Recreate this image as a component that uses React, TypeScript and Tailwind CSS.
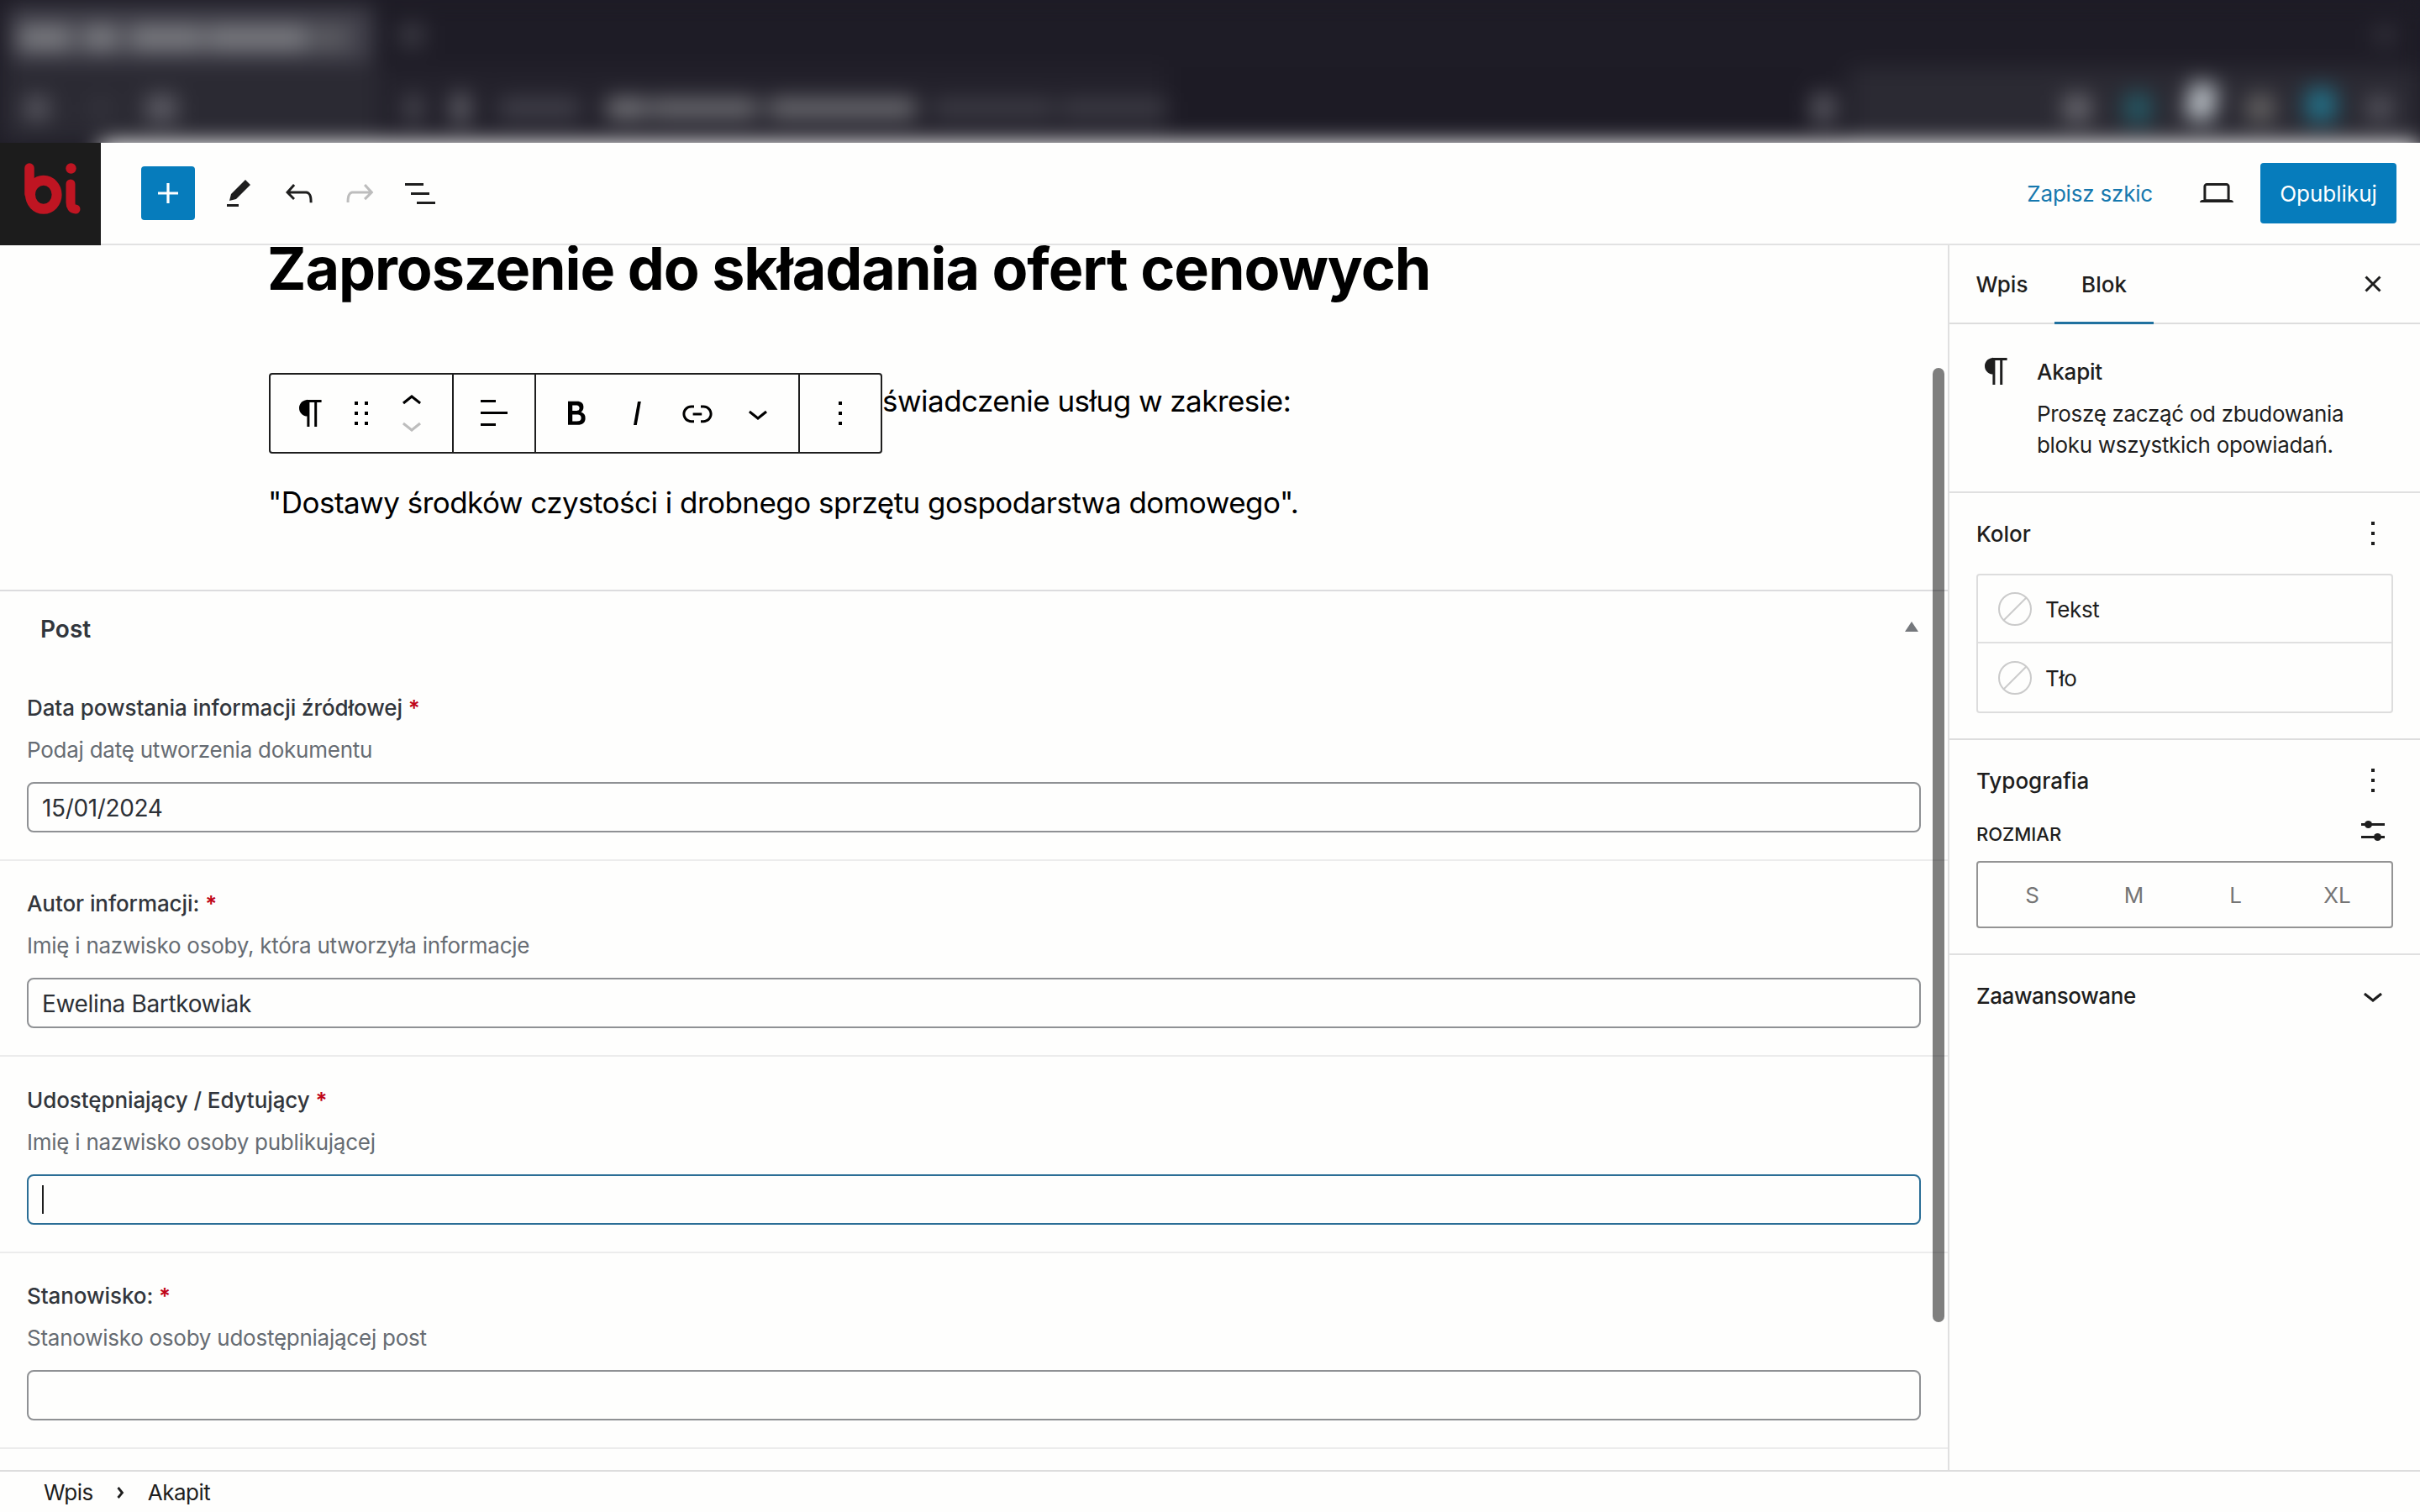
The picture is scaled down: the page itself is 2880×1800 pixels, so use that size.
import React from 'react';
import clsx from 'clsx';

interface Field {
  id: string;
  label: string;
  description: string;
  value: string;
  focused?: boolean;
  className?: string;
}

const fields: Field[] = [
  { id: 'date', label: "Data powstania informacji źródłowej", description: "Podaj datę utworzenia dokumentu", value: "15/01/2024", className: "h-[233px] pt-[33px]" },
  { id: 'author', label: "Autor informacji:", description: "Imię i nazwisko osoby, która utworzyła informacje", value: "Ewelina Bartkowiak", className: "h-[233px] pt-[33px]" },
  { id: 'editor', label: "Udostępniający / Edytujący", description: "Imię i nazwisko osoby publikującej", value: "", focused: true, className: "h-[234px] pt-[34px]" },
  { id: 'position', label: "Stanowisko:", description: "Stanowisko osoby udostępniającej post", value: "", className: "h-[233px] pt-[33px]" },
];

const sizes = ["S", "M", "L", "XL"];

// Blurred shapes of the browser window above the editor
const tabShapes = [
  "ml-3 w-16 bg-[#7c7d82]",
  "ml-3 w-11 bg-[#7c7d82]",
  "ml-3 w-22 bg-[#7c7d82]",
  "ml-1 w-30 bg-[#7c7d82]",
  "ml-1 w-11 bg-[#5c5c62]",
];

const addressShapes = [
  "ml-[30px] size-7 bg-[#5b5a63]",
  "ml-13 size-5 bg-[#393841]",
  "ml-11 h-8 w-9 bg-[#5e5d66]",
  "ml-[272px] h-8 w-5 bg-[#4b4a53]",
  "ml-9 h-9 w-5 bg-[#66656d]",
  "ml-9 h-6 w-24 bg-[#41404a]",
  "ml-8 h-6 w-12 bg-[#77777c]",
  "ml-1 h-6 w-32 bg-[#6d6d72]",
  "ml-3 h-6 w-44 bg-[#6d6d72]",
  "ml-5 h-5 w-36 bg-[#403f48]",
  "ml-2 h-5 w-32 bg-[#403f48]",
];

const extensionShapes = [
  "ml-[272px] size-8 bg-[#6a6970]",
  "ml-[40px] h-9 w-8 bg-[#245965]",
  "ml-[44px] h-11 w-8 -translate-y-2 rotate-12 bg-[#bcc2c8]",
  "ml-[38px] h-8 w-8 bg-[#666464]",
  "ml-[38px] h-10 w-9 -translate-y-1 bg-[#236f86]",
  "ml-[38px] size-7 bg-[#57565f]",
];

interface IconProps {
  d: string;
  className?: string;
}

function Icon({ d, className }: IconProps) {
  return (
    <svg viewBox="0 0 24 24" className={clsx("size-12 shrink-0", className)} fill="currentColor">
      <path d={d} />
    </svg>
  );
}

const icons = {
  plus: "M18 11.2h-5.2V6h-1.6v5.2H6v1.6h5.2V18h1.6v-5.2H18z",
  edit: "m19 7-3-3-8.5 8.5-1 4 4-1L19 7Zm-7 11.5H5V20h7v-1.5Z",
  undo: "M18.3 11.7c-.6-.6-1.4-.9-2.3-.9H6.7l2.9-3.3-1.1-1-4.5 5L8.5 16l1-1-2.7-2.7H16c.5 0 .9.2 1.3.5 1 1 1 3.4 1 4.5v.3h1.5v-.2c0-1.5 0-4.3-1.5-5.7z",
  redo: "M15.6 6.5l-1.1 1 2.9 3.3H8c-.9 0-1.7.3-2.3.9-1.4 1.5-1.4 4.2-1.4 5.6v.2h1.5v-.3c0-1.1 0-3.5 1-4.5.3-.3.7-.5 1.3-.5h9.2L14.5 15l1.1 1.1 4.6-4.6-4.6-5z",
  listView: "M3 6h11v1.5H3V6Zm3.5 5.5h11V13h-11v-1.5ZM21 17H10v1.5h11V17Z",
  desktop: "M20.5 16h-.7V8c0-1.1-.9-2-2-2H6.2c-1.1 0-2 .9-2 2v8h-.7c-.8 0-1.5.7-1.5 1.5h20c0-.8-.7-1.5-1.5-1.5zM5.7 8c0-.3.2-.5.5-.5h11.6c.3 0 .5.2.5.5v7.6H5.7V8z",
  close: "M12 13.06l3.712 3.713 1.061-1.06L13.061 12l3.712-3.712-1.06-1.06L12 10.938 8.288 7.227l-1.061 1.06L10.939 12l-3.712 3.712 1.06 1.061L12 13.061z",
  paragraph: "M18.3 4H9.9v-.1l-.9.2c-2.3.4-4 2.4-4 4.8s1.7 4.4 4 4.8l.7.1V20h1.5V5.5h2.9V20h1.5V5.5h2.7V4z",
  drag: "M8 7h2V5H8v2zm0 6h2v-2H8v2zm0 6h2v-2H8v2zm6-14v2h2V5h-2zm0 8h2v-2h-2v2zm0 6h2v-2h-2v2z",
  chevronUp: "M6.5 12.4L12 8l5.5 4.4-.9 1.2L12 10l-4.5 3.6-1-1.2z",
  chevronDown: "M17.5 11.6L12 16l-5.5-4.4.9-1.2L12 14l4.5-3.6 1 1.2z",
  alignLeft: "M13 5.5H4V4h9v1.5Zm7 7H4V11h16v1.5Zm-7 7H4V18h9v1.5Z",
  bold: "M14.7 11.3c1-.6 1.5-1.6 1.5-3 0-2.3-1.3-3.4-4-3.4H7v14h5.8c1.4 0 2.5-.3 3.3-1 .8-.7 1.2-1.7 1.2-2.9.1-1.9-.8-3.1-2.6-3.7zm-5.1-4h2.3c.6 0 1.1.1 1.4.4.3.3.5.7.5 1.2s-.2 1-.5 1.2c-.3.3-.8.4-1.4.4H9.6V7.3zm4.6 9c-.4.3-1 .4-1.7.4H9.6v-3.9h2.9c.7 0 1.3.2 1.7.5.4.3.6.8.6 1.5s-.2 1.2-.6 1.5z",
  italic: "M12.5 5L10 19h1.9l2.5-14z",
  link: "M15.6 7.2H14v1.5h1.6c2 0 3.7 1.7 3.7 3.7s-1.7 3.7-3.7 3.7H14v1.5h1.6c2.8 0 5.2-2.3 5.2-5.2 0-2.9-2.3-5.2-5.2-5.2zM4.7 12.4c0-2 1.7-3.7 3.7-3.7H10V7.2H8.4c-2.9 0-5.2 2.3-5.2 5.2 0 2.9 2.3 5.2 5.2 5.2H10v-1.5H8.4c-2 0-3.7-1.7-3.7-3.7zm4.6.9h5.3v-1.5H9.3v1.5z",
  more: "M13 19h-2v-2h2v2zm0-6h-2v-2h2v2zm0-6h-2V5h2v2z",
};

function BrowserChrome() {
  return (
    <div className="h-[170px] shrink-0 overflow-hidden bg-[#1e1c26]">
      <div className="h-[260px] blur-[13px]">
        <div className="flex h-20 bg-[#1e1c26] pt-2">
          <div className="ml-2.5 flex h-17 w-[434px] items-center bg-[#42414b] pt-1.5">
            {tabShapes.map((shape, i) => (
              <span key={i} className={clsx("h-7 shrink-0 rounded", shape)} />
            ))}
          </div>
          <span className="mt-5 ml-8 size-7 bg-[#3c3b44]" />
          <span className="mt-6 mr-8 ml-auto size-5 bg-[#393841]" />
        </div>
        <div className="flex h-[90px]">
          <div className="flex w-[1388px] items-center bg-linear-to-r from-[#2b2a33] from-32% to-[#23212b] to-33% pt-2">
            {addressShapes.map((shape, i) => (
              <span key={i} className={clsx("shrink-0 rounded", shape)} />
            ))}
          </div>
          <div className="w-[768px] bg-[#1d1b25]" />
          <div className="flex flex-1 items-center bg-linear-to-r from-[#1d1b25] from-4% to-[#2b2a33] to-8% pt-2">
            <span className="h-9 w-7 bg-[#57565f]" />
            {extensionShapes.map((shape, i) => (
              <span key={i} className={clsx("shrink-0 rounded", shape)} />
            ))}
          </div>
        </div>
        <div className="ml-[120px] h-[90px] bg-white" />
      </div>
    </div>
  );
}

function Logo() {
  return (
    <div className="h-[122px] w-[120px] shrink-0 self-start bg-[#1c1c1c]">
      <svg viewBox="0 0 120 122" className="h-[122px] w-[120px]" fill="none" stroke="#bf1522" strokeLinecap="round">
        <path d="M35 30v31" strokeWidth="11.5" />
        <ellipse cx="51.8" cy="61.8" rx="15.8" ry="17" strokeWidth="12" />
        <path d="M84 49v22c0 5 2 8 6 8" strokeWidth="11" />
        <circle cx="84.5" cy="30.5" r="6.2" fill="#bf1522" stroke="none" />
      </svg>
    </div>
  );
}

function Header() {
  return (
    <header className="flex h-[122px] shrink-0 items-center border-b-2 border-[#e2e2e2]">
      <Logo />
      <button className="ml-12 flex size-16 items-center justify-center rounded bg-[#067cbc] text-white">
        <Icon d={icons.plus} />
      </button>
      <div className="ml-4 flex items-center">
        <button className="flex w-18 justify-center"><Icon d={icons.edit} /></button>
        <button className="flex w-18 justify-center"><Icon d={icons.undo} /></button>
        <button className="flex w-18 justify-center text-[#bdbdbd]"><Icon d={icons.redo} /></button>
        <button className="flex w-18 justify-center"><Icon d={icons.listView} /></button>
      </div>
      <div className="mr-7 ml-auto flex items-center">
        <button className="pt-0.5 tracking-[-0.2px] text-[#1678ae]">Zapisz szkic</button>
        <button className="mr-4 ml-10 flex w-18 justify-center"><Icon d={icons.desktop} /></button>
        <button className="h-18 w-[162px] rounded bg-[#067cbc] pt-0.5 text-white">Opublikuj</button>
      </div>
    </header>
  );
}

function BlockToolbar() {
  return (
    <div className="flex h-24 w-[730px] shrink-0 rounded border-2 border-[#1e1e1e]">
      <div className="flex w-[218px] items-center border-r-2 border-[#1e1e1e] pl-6">
        <Icon d={icons.paragraph} />
        <Icon d={icons.drag} className="ml-3" />
        <div className="relative ml-3 h-full w-12">
          <Icon d={icons.chevronUp} className="absolute top-2" />
          <Icon d={icons.chevronDown} className="absolute top-[36px] text-[#bdbdbd]" />
        </div>
      </div>
      <div className="flex w-[98px] items-center justify-center border-r-2 border-[#1e1e1e]">
        <Icon d={icons.alignLeft} />
      </div>
      <div className="flex w-[314px] items-center gap-6 border-r-2 border-[#1e1e1e] pl-6">
        <Icon d={icons.bold} />
        <Icon d={icons.italic} />
        <Icon d={icons.link} />
        <Icon d={icons.chevronDown} />
      </div>
      <div className="flex flex-1 items-center justify-center">
        <Icon d={icons.more} />
      </div>
    </div>
  );
}

function MetaField({ field }: { field: Field }) {
  return (
    <div className={clsx("border-b-2 border-[#ececec] px-8", field.className)}>
      <label className="block font-medium tracking-[-0.08px] text-[#32363c]">
        {field.label} <span className="font-semibold text-[#c00518]">*</span>
      </label>
      <p className="mt-3.5 tracking-[-0.25px] text-[#666c73]">{field.description}</p>
      <div
        className={clsx(
          "mt-5 flex h-[60px] items-center rounded-lg border-2 pt-0.5 pl-4 text-[28px] tracking-[-0.35px] text-[#2c3036]",
          field.focused ? "border-[#2b6e96]" : "border-[#8f9194]"
        )}
      >
        {field.focused ? <span className="mb-0.5 h-[34px] w-0.5 bg-[#1e1e1e]" /> : field.value}
      </div>
    </div>
  );
}

function Editor() {
  return (
    <main className="relative w-[2318px] overflow-hidden">
      <div className="flex h-[410px] flex-col pl-[319px] text-black">
        <h1 className="-mt-3 -ml-px text-[70px] leading-[80px] font-bold tracking-[-1.06px]">
          Zaproszenie do składania ofert cenowych
        </h1>
        <div className="mt-[84px] ml-px flex text-[35px] leading-12 tracking-[-0.53px]">
          <BlockToolbar />
          <p className="pt-[9px]">świadczenie usług w zakresie:</p>
        </div>
        <p className="mt-[34px] text-[35px] leading-12 tracking-[-0.53px]">
          "Dostawy środków czystości i drobnego sprzętu gospodarstwa domowego".
        </p>
      </div>

      <section className="border-t-2 border-[#dcdcde]">
        <div className="flex h-22 items-start justify-between pt-[25px] pr-[35px] pl-12">
          <h2 className="text-[28px] leading-10 font-semibold text-[#32363c]">Post</h2>
          <svg viewBox="0 0 16 12" className="mt-[11px] h-3 w-4" fill="#75787c">
            <path d="M8 0l8 12H0z" />
          </svg>
        </div>
        {fields.map((field) => (
          <MetaField key={field.id} field={field} />
        ))}
      </section>

      {/* Scrollbar thumb */}
      <div className="absolute top-[146px] right-1 h-[1136px] w-3.5 rounded-full bg-black/50" />
    </main>
  );
}

function ColorRow({ label }: { label: string }) {
  return (
    <div className="flex h-[81px] items-center pl-6">
      <svg viewBox="0 0 40 40" className="size-10" fill="none" stroke="#cbcbcb" strokeWidth="2">
        <circle cx="20" cy="20" r="19" />
        <path d="M6.5 33.5L33.5 6.5" />
      </svg>
      <span className="ml-4 pt-0.5 tracking-[-0.4px]">{label}</span>
    </div>
  );
}

function Sidebar() {
  return (
    <aside className="flex w-[562px] flex-col border-l-2 border-[#e0e0e0]">
      <div className="flex h-[94px] shrink-0 border-b-2 border-[#dddddd] font-medium">
        <button className="w-[125px] pt-0.5">Wpis</button>
        <button className="relative w-[118px] pt-0.5">
          Blok
          <span className="absolute -bottom-0.5 left-0 h-[3px] w-full bg-[#20719f]" />
        </button>
        <button className="mr-8 ml-auto"><Icon d={icons.close} /></button>
      </div>

      <div className="flex h-[201px] shrink-0 border-b-2 border-[#e0e0e0] pt-8 pl-8">
        <Icon d={icons.paragraph} />
        <div className="ml-6">
          <h2 className="mt-[7px] font-medium tracking-[-0.2px]">Akapit</h2>
          <p className="mt-[13px] leading-[37px] tracking-[-0.32px]">
            Proszę zacząć od zbudowania<br />bloku wszystkich opowiadań.
          </p>
        </div>
      </div>

      <div className="h-[294px] shrink-0 border-b-2 border-[#dddddd] px-8">
        <div className="flex h-24 items-center justify-between">
          <h2 className="pt-0.5 font-medium">Kolor</h2>
          <Icon d={icons.more} />
        </div>
        <div className="divide-y-2 divide-[#e0e0e0] rounded-sm border-2 border-[#dddddd]">
          <ColorRow label="Tekst" />
          <ColorRow label="Tło" />
        </div>
      </div>

      <div className="h-64 shrink-0 border-b-2 border-[#e0e0e0] px-8">
        <div className="flex h-24 items-center justify-between">
          <h2 className="pt-0.5 font-medium">Typografia</h2>
          <Icon d={icons.more} />
        </div>
        <div className="flex h-12 items-start justify-between">
          <span className="text-[22px] leading-8 font-medium">ROZMIAR</span>
          <svg viewBox="0 0 28 24" className="mr-2.5 h-6 w-7" fill="currentColor">
            <path d="M0 3h28v3H0zM0 18h28v3H0z" />
            <circle cx="8.5" cy="4.5" r="4.5" />
            <circle cx="19.5" cy="19.5" r="4.5" />
          </svg>
        </div>
        <div className="flex h-20 items-center rounded-sm border-2 border-[#949494] px-1 pt-0.5 text-[#757575]">
          {sizes.map((size) => (
            <span key={size} className="flex-1 text-center">{size}</span>
          ))}
        </div>
      </div>

      <div className="flex h-24 items-center justify-between px-8">
        <h2 className="pt-0.5 font-medium tracking-[-0.4px]">Zaawansowane</h2>
        <Icon d={icons.chevronDown} />
      </div>
    </aside>
  );
}

function Footer() {
  return (
    <footer className="flex h-[50px] shrink-0 items-center border-t-2 border-[#dddddd] pt-0.5 pl-[52px] tracking-[-0.5px]">
      <span>Wpis</span>
      <svg viewBox="0 0 9 14" className="ml-7 h-3.5 w-[9px]" fill="none" stroke="currentColor" strokeWidth="2.8">
        <path d="M1.5 1l5 6-5 6" />
      </svg>
      <span className="ml-7">Akapit</span>
    </footer>
  );
}

export default function App() {
  return (
    <div className="flex h-[1800px] w-[2880px] flex-col overflow-hidden bg-[#fefefd] font-[Inter,'Liberation_Sans',sans-serif] text-[26px] leading-9 text-[#1e1e1e]">
      <BrowserChrome />
      <Header />
      <div className="flex min-h-0 flex-1">
        <Editor />
        <Sidebar />
      </div>
      <Footer />
    </div>
  );
}
